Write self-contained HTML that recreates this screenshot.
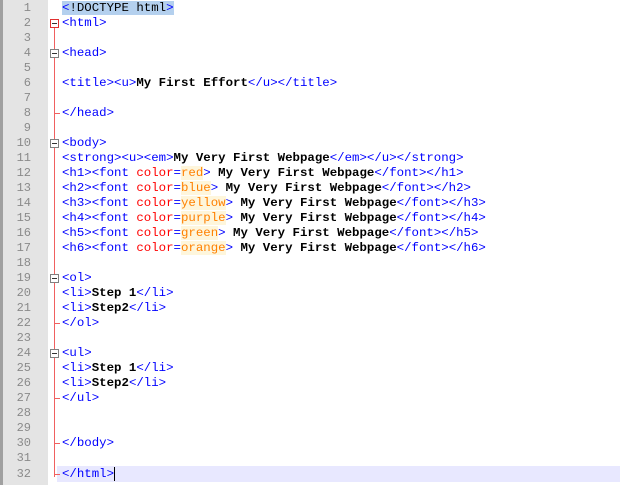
<!DOCTYPE html>
<html><head><style>
body{margin:0;width:620px;height:485px;background:#fff;position:relative;overflow:hidden;font-family:"Liberation Mono",monospace;font-size:12.4px}
#g{position:absolute;left:0;top:0;width:48px;height:485px;background:#e4e4e4;border-left:3px solid #a0a0a0;box-sizing:border-box}
#w{position:absolute;left:0;top:1px;width:620px;height:485px}
.n{position:absolute;left:0;width:31px;text-align:right;color:#8a8a8a;height:15px;line-height:15px;font-size:12px}
.r{position:absolute;left:62px;height:15px;line-height:15px;white-space:pre;color:#000}
.t{color:#0000ff}.a{color:#ff0000}.v{color:#ff8000;background:#fef6dc}.b{font-weight:bold}
#cur{position:absolute;left:57px;right:0;top:466px;height:16px;background:#e8e8ff}
#fl{position:absolute;left:54px;top:23px;width:1px;height:453px;background:#f06060}
.box{position:absolute;left:50px;width:7px;height:7px;border:1px solid #808080;background:#fff}
.box:after{content:"";position:absolute;left:1px;top:3px;width:5px;height:1px;background:#333}
.tk{position:absolute;left:54px;width:6px;height:1px;background:#f06060}
</style></head><body>
<div id="g"></div>
<div id="cur"></div>
<div id="w">
<div id="fl"></div>
<div class="box" style="top:18px;border-color:#e03030"></div>
<div class="box" style="top:48px"></div>
<div class="box" style="top:138px"></div>
<div class="box" style="top:273px"></div>
<div class="box" style="top:348px"></div>
<div class="tk" style="top:112px"></div>
<div class="tk" style="top:322px"></div>
<div class="tk" style="top:397px"></div>
<div class="tk" style="top:442px"></div>
<div class="tk" style="top:473px"></div>
<div class="n" style="top:0">1</div><div class="n" style="top:15px">2</div><div class="n" style="top:30px">3</div><div class="n" style="top:45px">4</div><div class="n" style="top:60px">5</div><div class="n" style="top:75px">6</div><div class="n" style="top:90px">7</div><div class="n" style="top:105px">8</div><div class="n" style="top:120px">9</div><div class="n" style="top:135px">10</div><div class="n" style="top:150px">11</div><div class="n" style="top:165px">12</div><div class="n" style="top:180px">13</div><div class="n" style="top:195px">14</div><div class="n" style="top:210px">15</div><div class="n" style="top:225px">16</div><div class="n" style="top:240px">17</div><div class="n" style="top:255px">18</div><div class="n" style="top:270px">19</div><div class="n" style="top:285px">20</div><div class="n" style="top:300px">21</div><div class="n" style="top:315px">22</div><div class="n" style="top:330px">23</div><div class="n" style="top:345px">24</div><div class="n" style="top:360px">25</div><div class="n" style="top:375px">26</div><div class="n" style="top:390px">27</div><div class="n" style="top:405px">28</div><div class="n" style="top:420px">29</div><div class="n" style="top:435px">30</div><div class="n" style="top:450px">31</div><div class="n" style="top:466px">32</div>
<div class="r" style="top:0"><span style="background:#b4d0ee"><span class="t">&lt;</span>!DOCTYPE html<span class="t">&gt;</span></span></div>
<div class="r t" style="top:15px">&lt;html&gt;</div>
<div class="r t" style="top:45px">&lt;head&gt;</div>
<div class="r" style="top:75px"><span class="t">&lt;title&gt;&lt;u&gt;</span><span class="b">My First Effort</span><span class="t">&lt;/u&gt;&lt;/title&gt;</span></div>
<div class="r t" style="top:105px">&lt;/head&gt;</div>
<div class="r t" style="top:135px">&lt;body&gt;</div>
<div class="r" style="top:150px"><span class="t">&lt;strong&gt;&lt;u&gt;&lt;em&gt;</span><span class="b">My Very First Webpage</span><span class="t">&lt;/em&gt;&lt;/u&gt;&lt;/strong&gt;</span></div>
<div class="r" style="top:165px"><span class="t">&lt;h1&gt;&lt;font </span><span class="a">color</span><span class="t">=</span><span class="v">red</span><span class="t">&gt;</span><span class="b"> My Very First Webpage</span><span class="t">&lt;/font&gt;&lt;/h1&gt;</span></div>
<div class="r" style="top:180px"><span class="t">&lt;h2&gt;&lt;font </span><span class="a">color</span><span class="t">=</span><span class="v">blue</span><span class="t">&gt;</span><span class="b"> My Very First Webpage</span><span class="t">&lt;/font&gt;&lt;/h2&gt;</span></div>
<div class="r" style="top:195px"><span class="t">&lt;h3&gt;&lt;font </span><span class="a">color</span><span class="t">=</span><span class="v">yellow</span><span class="t">&gt;</span><span class="b"> My Very First Webpage</span><span class="t">&lt;/font&gt;&lt;/h3&gt;</span></div>
<div class="r" style="top:210px"><span class="t">&lt;h4&gt;&lt;font </span><span class="a">color</span><span class="t">=</span><span class="v">purple</span><span class="t">&gt;</span><span class="b"> My Very First Webpage</span><span class="t">&lt;/font&gt;&lt;/h4&gt;</span></div>
<div class="r" style="top:225px"><span class="t">&lt;h5&gt;&lt;font </span><span class="a">color</span><span class="t">=</span><span class="v">green</span><span class="t">&gt;</span><span class="b"> My Very First Webpage</span><span class="t">&lt;/font&gt;&lt;/h5&gt;</span></div>
<div class="r" style="top:240px"><span class="t">&lt;h6&gt;&lt;font </span><span class="a">color</span><span class="t">=</span><span class="v">orange</span><span class="t">&gt;</span><span class="b"> My Very First Webpage</span><span class="t">&lt;/font&gt;&lt;/h6&gt;</span></div>
<div class="r t" style="top:270px">&lt;ol&gt;</div>
<div class="r" style="top:285px"><span class="t">&lt;li&gt;</span><span class="b">Step 1</span><span class="t">&lt;/li&gt;</span></div>
<div class="r" style="top:300px"><span class="t">&lt;li&gt;</span><span class="b">Step2</span><span class="t">&lt;/li&gt;</span></div>
<div class="r t" style="top:315px">&lt;/ol&gt;</div>
<div class="r t" style="top:345px">&lt;ul&gt;</div>
<div class="r" style="top:360px"><span class="t">&lt;li&gt;</span><span class="b">Step 1</span><span class="t">&lt;/li&gt;</span></div>
<div class="r" style="top:375px"><span class="t">&lt;li&gt;</span><span class="b">Step2</span><span class="t">&lt;/li&gt;</span></div>
<div class="r t" style="top:390px">&lt;/ul&gt;</div>
<div class="r t" style="top:435px">&lt;/body&gt;</div>
<div class="r t" style="top:466px">&lt;/html&gt;<span style="border-left:1px solid #000"></span></div>
</div>
</body></html>
